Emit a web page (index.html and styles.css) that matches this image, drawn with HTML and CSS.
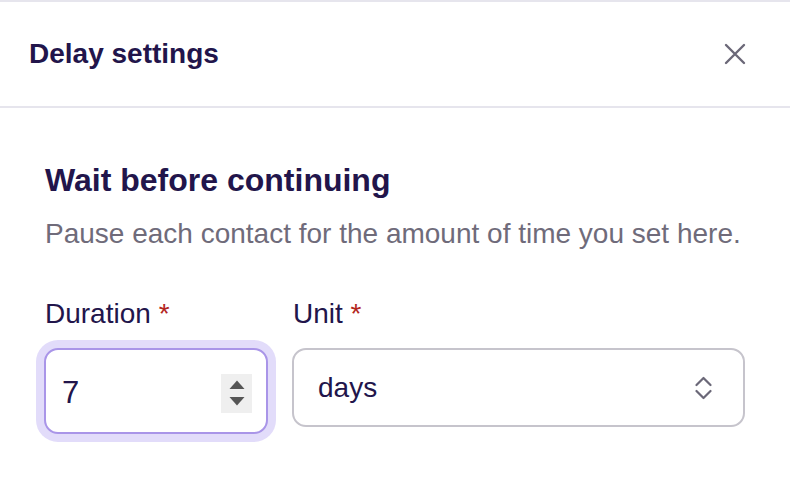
FILE: index.html
```html
<!DOCTYPE html>
<html>
<head>
<meta charset="utf-8">
<link rel="stylesheet" href="styles.css">
</head>
<body>
<div class="panel">
  <div class="header">
    <h1 class="header-title">Delay settings</h1>
    <button class="close" aria-label="Close">
      <svg width="22" height="22" viewBox="0 0 22 22"><path d="M2 2 L20 20 M20 2 L2 20" stroke="#6b6878" stroke-width="2.4" stroke-linecap="round" fill="none"/></svg>
    </button>
  </div>
  <div class="body">
    <h2 class="section-title">Wait before continuing</h2>
    <p class="section-desc">Pause each contact for the amount of time you set here.</p>
    <div class="fields">
      <div class="field field-duration">
        <label class="label">Duration <span class="req">*</span></label>
        <div class="input focused">
          <span class="value value-num">7</span>
          <span class="spinner">
            <svg width="16" height="28" viewBox="0 0 16 28"><path d="M0.5 10 L8 1.5 L15.5 10 Z" fill="#555"/><path d="M0.5 18 L8 26.5 L15.5 18 Z" fill="#555"/></svg>
          </span>
        </div>
      </div>
      <div class="field field-unit">
        <label class="label">Unit <span class="req">*</span></label>
        <div class="select">
          <span class="value">days</span>
          <svg class="chev" width="17" height="24" viewBox="0 0 17 24"><path d="M1.5 9 L8.5 2 L15.5 9 M1.5 15 L8.5 22 L15.5 15" stroke="#6b6878" stroke-width="2.2" stroke-linecap="round" stroke-linejoin="round" fill="none"/></svg>
        </div>
      </div>
    </div>
  </div>
</div>
</body>
</html>
```
FILE: styles.css
```css
* { box-sizing: border-box; }
html, body { margin: 0; padding: 0; background: #ffffff; }
body { font-family: "Liberation Sans", Arial, sans-serif; color: #22154b; min-height: 498px; }

.panel { border-top: 2px solid #e6e5ed; }

.header {
  height: 106px;
  display: flex;
  align-items: center;
  justify-content: space-between;
  padding: 0 44px 0 29px;
  border-bottom: 2px solid #e6e5ed;
}
.header-title {
  margin: 0;
  font-size: 28px;
  line-height: 36px;
  font-weight: 700;
  color: #22154b;
}
.close {
  border: 0;
  background: none;
  padding: 0;
  width: 22px;
  height: 22px;
  display: flex;
}

.body { padding: 52px 45px 60px 45px; }

.section-title {
  margin: 0;
  font-size: 32px;
  line-height: 40px;
  font-weight: 700;
  color: #22154b;
}
.section-desc {
  margin: 16px 0 0 0;
  font-size: 28px;
  line-height: 36px;
  color: #6f6b7a;
}

.fields {
  display: flex;
  gap: 24px;
  margin-top: 44px;
  margin-left: -1px;
}
.field { display: flex; flex-direction: column; }
.field-duration { width: 224px; }
.field-unit { width: 453px; }

.label {
  font-size: 28px;
  line-height: 36px;
  color: #22154b;
  padding-left: 1px;
  margin-bottom: 16px;
}
.req { color: #b3261e; }

.input, .select {
  display: flex;
  align-items: center;
  border-radius: 14px;
  background: #fff;
}
.input {
  height: 86px;
  border: 2px solid #a995e8;
  box-shadow: 0 0 0 8px #e2dcfa;
  padding: 0 14px 0 16px;
}
.select {
  height: 79px;
  border: 2px solid #c6c4cc;
  padding: 0 31px 0 24px;
}
.value {
  flex: 1;
  font-size: 28px;
  line-height: 36px;
  color: #22154b;
}
.value-num { font-size: 31px; padding-top: 4px; }
.spinner {
  width: 31px;
  height: 39px;
  background: #efefef;
  display: flex;
  align-items: center;
  justify-content: center;
  margin-top: 4px;
}
.chev { display: block; }
```
